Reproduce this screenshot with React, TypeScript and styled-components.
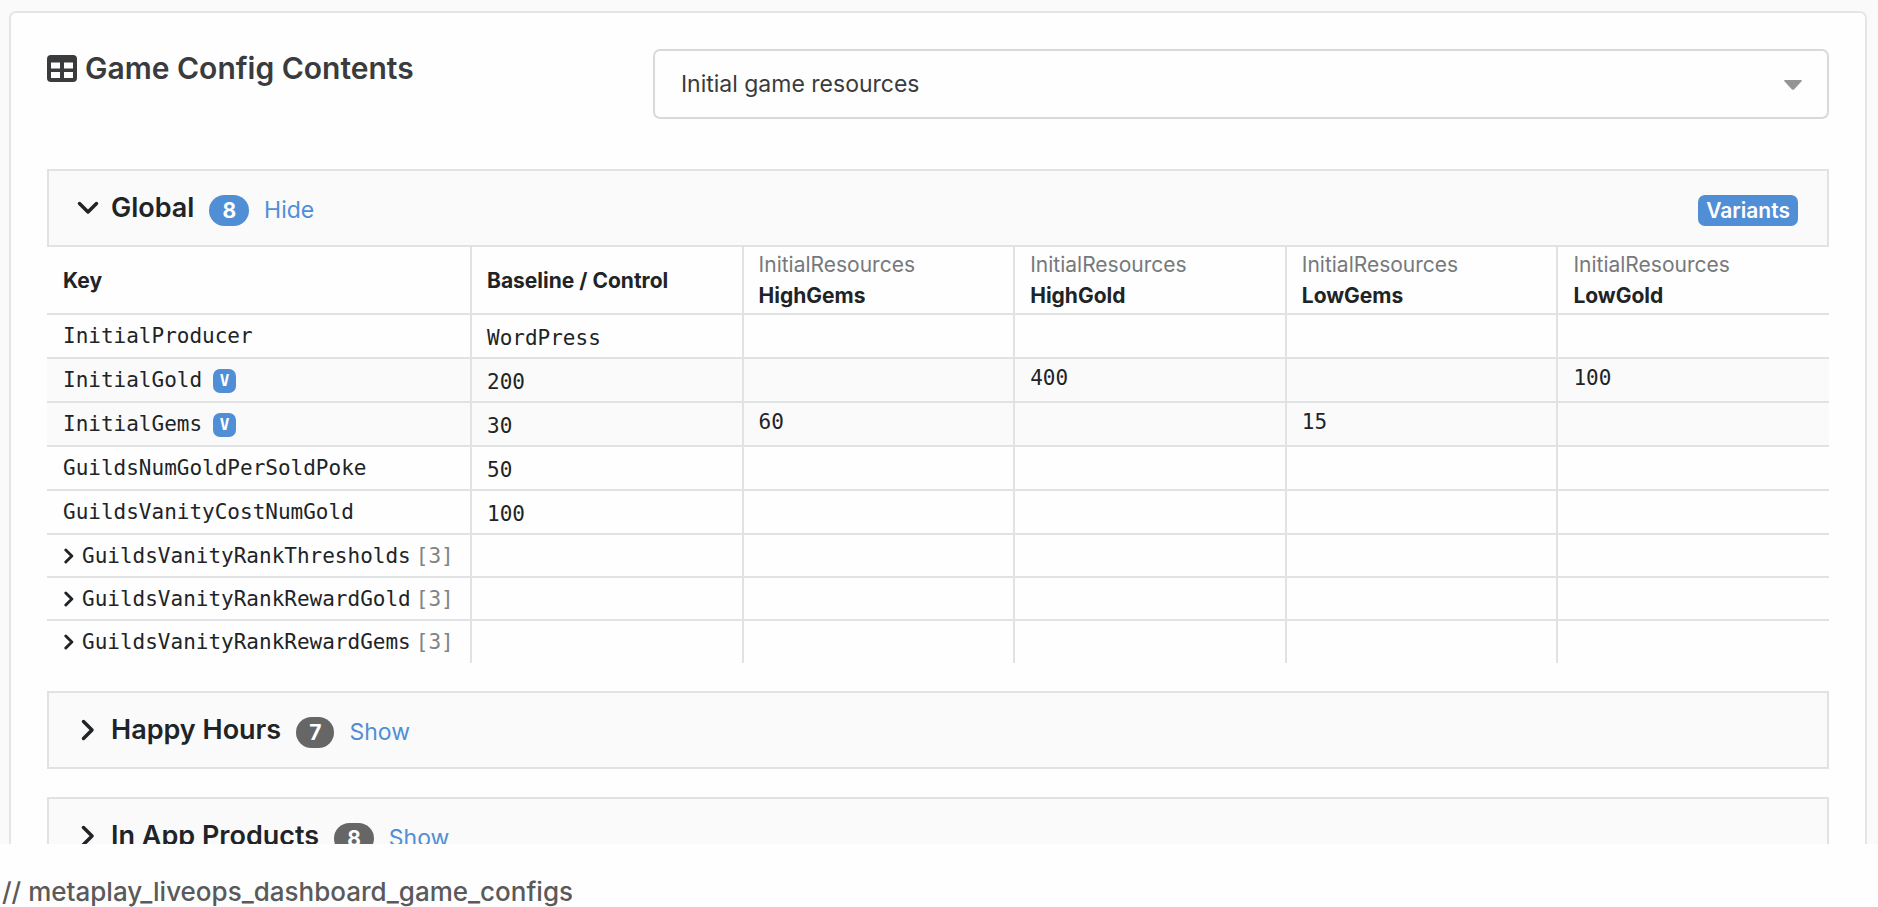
import React, { useState } from "react";
import styled, { createGlobalStyle } from "styled-components";

const sans = `Inter, "Liberation Sans", sans-serif`;
const mono = `"DejaVu Sans Mono", "Liberation Mono", monospace`;
const line = "#e0e2e3";
const blue = "#508fd6";
const ink = "#212427";

const GlobalStyle = createGlobalStyle`
  *, *::before, *::after { box-sizing: border-box; }
  body { margin: 0; background: #fefefe; font-family: ${sans}; color: ${ink}; }
`;

const Page = styled.figure`
  margin: 0;
  height: 100vh;
  display: flex;
  flex-direction: column;
`;

const Preview = styled.div`
  flex: 1;
  min-height: 0;
  overflow: hidden;
  padding: 11px 11px 0 9px;
  background: #fafafa;
`;

const Caption = styled.figcaption`
  flex: none;
  padding: 32px 2px 0;
  height: 63px;
  font-size: 26px;
  line-height: 32px;
  font-weight: 500;
  color: #5a5a5a;
`;

const Card = styled.section`
  padding: 36px;
  background: #fefefe;
  border: 2px solid #e4e5e6;
  border-radius: 7px;
`;

const CardHeader = styled.header`
  display: grid;
  grid-template-columns: 34% 66%;
  align-items: start;
  margin-bottom: 50px;
`;

const Title = styled.h1`
  margin: 0;
  display: flex;
  align-items: center;
  gap: 8px;
  font-size: 30px;
  line-height: 38px;
  font-weight: 600;
  color: #3a3b3c;
`;

const SelectBox = styled.label`
  display: grid;
  align-items: center;
  & > * { grid-area: 1 / 1; }
  & > svg { justify-self: end; margin: 2px 27px 0 0; pointer-events: none; }
`;

const Select = styled.select`
  appearance: none;
  width: 100%;
  height: 70px;
  padding: 0 60px 0 26px;
  border: 2px solid #d8d9da;
  border-radius: 7px;
  background: #fefefe;
  color: #3a3b3c;
  font-family: ${sans};
  font-size: 23px;
`;

const Section = styled.section`
  margin-bottom: 28px;
`;

const SectionBar = styled.div`
  display: flex;
  align-items: center;
  height: 78px;
  padding: 0 29px 0 26px;
  background: #fafafa;
  border: 2px solid ${line};
`;

const Toggle = styled.button`
  display: flex;
  align-items: center;
  padding: 0;
  border: 0;
  background: none;
  color: ${ink};
  font-family: ${sans};
  text-align: left;
  cursor: pointer;
`;

const ChevronSlot = styled.span`
  display: flex;
  justify-content: center;
  width: 26px;
  margin-right: 10px;
`;

const SectionName = styled.span`
  font-size: 27px;
  line-height: 36px;
  font-weight: 600;
`;

const Count = styled.span<{ $active: boolean }>`
  margin: 5px 15px 0;
  padding: 0 13px;
  border-radius: 16px;
  background: ${(p) => (p.$active ? blue : "#666")};
  color: #fff;
  font-size: 21px;
  line-height: 31px;
  font-weight: 700;
`;

const Action = styled.span`
  padding-top: 3px;
  color: ${blue};
  font-size: 23px;
  line-height: 32px;
`;

const Tag = styled.span`
  margin: 5px 0 0 auto;
  padding: 0 8px;
  border-radius: 7px;
  background: ${blue};
  color: #fff;
  font-size: 21px;
  line-height: 31px;
  font-weight: 600;
`;

const Table = styled.table`
  width: 100%;
  table-layout: fixed;
  border-collapse: collapse;
  text-align: left;
`;

const KeyCol = styled.col`
  width: 424px;
`;

const HeadCell = styled.th`
  height: 67px;
  padding: 0 15px;
  border-bottom: 2px solid ${line};
  font-size: 21px;
  line-height: 31px;
  font-weight: 700;
  white-space: nowrap;
  &:first-child { padding-left: 16px; }
  & + & { border-left: 2px solid ${line}; }
`;

const Experiment = styled.span`
  display: block;
  color: #76797c;
  font-weight: 400;
`;

const Row = styled.tr<{ $varied?: boolean; $nested?: boolean }>`
  height: ${(p) => (p.$nested ? 43 : 44)}px;
  background: ${(p) => (p.$varied ? "#fafafa" : "transparent")};
  border-bottom: 2px solid ${line};
  &:last-child { border-bottom: 0; }
`;

const KeyCell = styled.th`
  padding: 0 16px;
  font-family: ${mono};
  font-size: 21px;
  line-height: 32px;
  font-weight: 400;
  white-space: nowrap;
`;

const KeyContent = styled.span`
  display: flex;
  align-items: center;
`;

const ValueCell = styled.td<{ $control?: boolean }>`
  padding: ${(p) => (p.$control ? "4px 15px 0" : "0 15px 4px")};
  border-left: 2px solid ${line};
  font-family: ${mono};
  font-size: 21px;
  line-height: 32px;
`;

const VariantMark = styled.span`
  margin: 2px 0 0 11px;
  width: 23px;
  border-radius: 7px;
  background: ${blue};
  color: #fff;
  text-align: center;
  font-size: 16px;
  line-height: 24px;
  font-weight: 700;
`;

const Expand = styled.button`
  display: flex;
  align-items: center;
  gap: 8px;
  padding: 0 0 0 1px;
  border: 0;
  background: none;
  color: inherit;
  font: inherit;
  cursor: pointer;
`;

const Length = styled.span`
  margin-left: 5px;
  color: #808386;
`;

const TableIcon = () => (
  <svg width="30" height="27" viewBox="0 0 30 27" aria-hidden="true">
    <path
      fill="currentColor"
      fillRule="evenodd"
      d="M4 0h22a4 4 0 0 1 4 4v19a4 4 0 0 1-4 4H4a4 4 0 0 1-4-4V4a4 4 0 0 1 4-4ZM4 7.500v6h9v-6ZM17 7.500v6h9v-6ZM4 17v6h9v-6ZM17 17v6h9v-6Z"
    />
  </svg>
);

const Caret = () => (
  <svg width="18" height="10" viewBox="0 0 18 10" aria-hidden="true">
    <path fill="#949494" d="M1 0h16q1.500 .3 .4 1.600L10 9.400q-1 .9-2 0L.6 1.600Q-.5 .3 1 0Z" />
  </svg>
);

const ChevronDown = () => (
  <svg width="22" height="14" viewBox="0 0 22 14" aria-hidden="true">
    <path d="M2.500 2.500L11 11l8.500-8.500" fill="none" stroke="currentColor" strokeWidth="3.500" strokeLinecap="round" strokeLinejoin="round" />
  </svg>
);

const ChevronRight = ({ small }: { small?: boolean }) => (
  <svg width={small ? 10 : 14} height={small ? 16 : 22} viewBox="0 0 14 22" aria-hidden="true">
    <path
      d="M2.500 2.500L11 11l-8.500 8.500"
      fill="none"
      stroke="currentColor"
      strokeWidth={small ? 4 : 3.5}
      strokeLinecap="round"
      strokeLinejoin="round"
    />
  </svg>
);

type Entry = {
  key: string;
  base?: string;
  values?: Record<string, string>;
  length?: number;
};

const variants = ["HighGems", "HighGold", "LowGems", "LowGold"];

const entries: Entry[] = [
  { key: "InitialProducer", base: "WordPress" },
  { key: "InitialGold", base: "200", values: { HighGold: "400", LowGold: "100" } },
  { key: "InitialGems", base: "30", values: { HighGems: "60", LowGems: "15" } },
  { key: "GuildsNumGoldPerSoldPoke", base: "50" },
  { key: "GuildsVanityCostNumGold", base: "100" },
  { key: "GuildsVanityRankThresholds", length: 3 },
  { key: "GuildsVanityRankRewardGold", length: 3 },
  { key: "GuildsVanityRankRewardGems", length: 3 },
];

const ConfigTable = () => (
  <Table>
    <colgroup>
      <KeyCol />
      <col />
      {variants.map((v) => (
        <col key={v} />
      ))}
    </colgroup>
    <thead>
      <tr>
        <HeadCell scope="col">Key</HeadCell>
        <HeadCell scope="col">Baseline / Control</HeadCell>
        {variants.map((v) => (
          <HeadCell scope="col" key={v}>
            <Experiment>InitialResources</Experiment>
            {v}
          </HeadCell>
        ))}
      </tr>
    </thead>
    <tbody>
      {entries.map((e) => (
        <Row key={e.key} $varied={!!e.values} $nested={!!e.length}>
          <KeyCell scope="row">
            <KeyContent>
              {e.length ? (
                <Expand type="button" aria-expanded={false}>
                  <ChevronRight small />
                  {e.key}
                </Expand>
              ) : (
                e.key
              )}
              {e.length && <Length>[{e.length}]</Length>}
              {e.values && <VariantMark>V</VariantMark>}
            </KeyContent>
          </KeyCell>
          <ValueCell $control>{e.base}</ValueCell>
          {variants.map((v) => (
            <ValueCell key={v}>{e.values?.[v]}</ValueCell>
          ))}
        </Row>
      ))}
    </tbody>
  </Table>
);

type SectionProps = {
  name: string;
  count: number;
  initiallyOpen?: boolean;
  tag?: string;
  children?: React.ReactNode;
};

const ConfigSection = ({ name, count, initiallyOpen = false, tag, children }: SectionProps) => {
  const [open, setOpen] = useState(initiallyOpen);
  return (
    <Section>
      <SectionBar>
        <Toggle type="button" aria-expanded={open} onClick={() => setOpen(!open)}>
          <ChevronSlot>{open ? <ChevronDown /> : <ChevronRight />}</ChevronSlot>
          <SectionName>{name}</SectionName>
          <Count $active={open}>{count}</Count>
          <Action>{open ? "Hide" : "Show"}</Action>
        </Toggle>
        {tag && <Tag>{tag}</Tag>}
      </SectionBar>
      {open && children}
    </Section>
  );
};

export default function App() {
  return (
    <>
      <GlobalStyle />
      <Page>
        <Preview>
          <Card>
            <CardHeader>
              <Title>
                <TableIcon />
                Game Config Contents
              </Title>
              <SelectBox>
                <Select aria-label="Config contents" defaultValue="initial">
                  <option value="initial">Initial game resources</option>
                </Select>
                <Caret />
              </SelectBox>
            </CardHeader>
            <ConfigSection name="Global" count={8} initiallyOpen tag="Variants">
              <ConfigTable />
            </ConfigSection>
            <ConfigSection name="Happy Hours" count={7} />
            <ConfigSection name="In App Products" count={8} />
          </Card>
        </Preview>
        <Caption>// metaplay_liveops_dashboard_game_configs</Caption>
      </Page>
    </>
  );
}
